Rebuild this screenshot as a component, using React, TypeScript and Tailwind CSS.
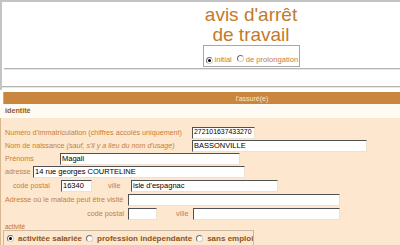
import React from 'react';

const labelCls = 'text-[7.2px] text-[#c4803c] whitespace-nowrap leading-none';

const Field = ({ w, value, small }: { w: string; value?: string; small?: boolean }) => (
  <div
    className={`${w} h-[12px] bg-white border-t border-l border-t-[#505050] border-l-[#505050] border-b border-r border-b-[#f0e0d0] border-r-[#f0e0d0] flex items-center px-[1px] ${small ? 'text-[6.9px]' : 'text-[7.5px]'} text-black whitespace-nowrap overflow-hidden leading-none`}
  >
    {value}
  </div>
);

const Radio = ({ checked }: { checked?: boolean }) => (
  <span className="inline-flex items-center justify-center w-[7px] h-[7px] rounded-full bg-white border border-t-[#707070] border-l-[#707070] border-b-[#d0d0d0] border-r-[#d0d0d0] shrink-0">
    {checked && <span className="w-[3px] h-[3px] rounded-full bg-black" />}
  </span>
);

export default function App() {
  return (
    <div className="w-[400px] h-[245px] overflow-hidden bg-white font-['Liberation_Sans',Arial,sans-serif]">
      {/* header */}
      <div className="border-t-2 border-l-2 border-[#c4c4c4] h-[90px]">
        <div className="pl-[100px] pt-[3px] flex flex-col items-center">
          <h1 className="text-[19px] leading-[20px] text-[#c27a2c] text-center">
            avis d'arrêt
            <br />
            de travail
          </h1>
          <div className="w-[97px] h-[22px] border border-[#a8a8a8] flex items-end pb-[2px] pl-[2px] gap-[2px] text-[7.6px] text-[#c4803c] leading-none">
            <Radio checked />
            <span>initial</span>
            <span className="ml-[3px]"><Radio /></span>
            <span>de prolongation</span>
          </div>
        </div>
        <div className="mt-[1px] ml-[2px] h-[1px] bg-[#b4b4b4]" />
        <div className="ml-[2px] h-[1px] bg-[#e6e6e6]" />
        <div className="h-[16px]" />
        <div className="h-[1px] bg-[#b4b4b4]" />
        <div className="h-[1px] bg-[#e6e6e6]" />
      </div>

      <div className="ml-[3px] mt-[2px] h-[12px] bg-[#c8863f] border-l border-[#e0a868] pl-[100px] flex items-center justify-center text-[7px] text-[#fbe8c8] leading-none">
        l'assuré(e)
      </div>

      <div className="h-[14px] bg-[#fffaf3] pl-[5px] flex items-center text-[7.2px] font-bold text-[#8b5a2b] leading-none">
        identité
      </div>

      {/* form */}
      <div className="h-[130px] bg-[#fde7cf] border-l border-[#d8b890] pl-[4px] pt-[8px]">
        <div className="h-[13px] flex items-center">
          <span className={`${labelCls} w-[187px]`}>Numéro d'immatriculation (chiffres accolés uniquement)</span>
          <Field w="w-[63px]" value="272101637433270" small />
        </div>
        <div className="h-[13px] flex items-center">
          <span className={`${labelCls} w-[187px]`}>
            Nom de naissance <i>(sauf, s'il y a lieu du nom d'usage)</i>
          </span>
          <Field w="w-[175px]" value="BASSONVILLE" />
        </div>
        <div className="h-[13px] flex items-center">
          <span className={`${labelCls} w-[55px]`}>Prénoms</span>
          <Field w="w-[180px]" value="Magali" />
        </div>
        <div className="h-[13px] flex items-center">
          <span className={`${labelCls} w-[28px]`}>adresse</span>
          <Field w="w-[212px]" value="14 rue georges COURTELINE" />
        </div>
        <div className="h-[14px] flex items-center mt-[1px]">
          <span className={`${labelCls} w-[56px] pl-[8px]`}>code postal</span>
          <Field w="w-[31px]" value="16340" />
          <span className={`${labelCls} w-[39px] pl-[16px]`}>ville</span>
          <Field w="w-[147px]" value="isle d'espagnac" />
        </div>
        <div className="h-[14px] flex items-center">
          <span className={`${labelCls} w-[123px]`}>Adresse où le malade peut être visité</span>
          <Field w="w-[212px]" />
        </div>
        <div className="h-[14px] flex items-center">
          <span className={`${labelCls} w-[123px] text-right pr-[4px]`}>code postal</span>
          <Field w="w-[29px]" />
          <span className={`${labelCls} w-[36px] pl-[19px]`}>ville</span>
          <Field w="w-[147px]" />
        </div>
        <div className="h-[9px] flex items-end text-[6.5px] text-[#b87438] leading-none">activité</div>
        <div className="w-[251px] h-[17px] -ml-[2px] border border-[#c9b8a4] flex items-center pl-[3px] gap-[4px] text-[8px] font-bold text-[#8b5520] leading-none whitespace-nowrap overflow-hidden">
          <Radio checked />
          <span>activitée salariée</span>
          <Radio />
          <span>profession indépendante</span>
          <Radio />
          <span>sans emploi</span>
        </div>
      </div>
    </div>
  );
}
